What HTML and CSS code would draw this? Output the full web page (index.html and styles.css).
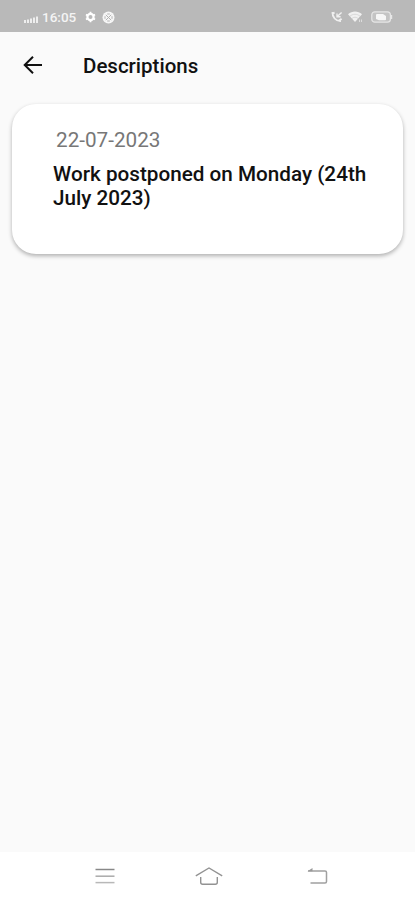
FILE: index.html
```
<!DOCTYPE html>
<html lang="en">
<head>
    <meta charset="UTF-8">
    <meta name="viewport" content="width=device-width, initial-scale=1.0">
    <title>Descriptions</title>
    <link rel="stylesheet" href="styles.css">
</head>
<body>

    <!-- Status bar -->
    <div class="status-bar">
        <div class="status-left">
            <svg class="signal" width="15" height="8" viewBox="0 0 15 8" fill="#eee">
                <rect x="0" y="5" width="2" height="3"/>
                <rect x="3" y="4.5" width="2" height="3.5"/>
                <rect x="6" y="3.5" width="2" height="4.5"/>
                <rect x="9" y="2.5" width="2" height="5.5"/>
                <rect x="12" y="1.5" width="2" height="6.5"/>
            </svg>
            <span class="time">16:05</span>
            <svg class="gear" width="11" height="12" viewBox="0 0 11 12">
                <circle cx="5.5" cy="6" r="3.1" fill="none" stroke="#fff" stroke-width="2.2"/>
                <path d="M5.5 .8v2M5.5 9.2v2M1 3.4l1.6 1M8.4 7.6l1.6 1M1 8.6l1.6-1M8.4 4.4l1.6-1" stroke="#fff" stroke-width="1.8"/>
            </svg>
            <svg width="13" height="13" viewBox="0 0 13 13">
                <circle cx="6.5" cy="6.5" r="6" fill="#f6f6f6"/>
                <path d="M3.8 3.8l5.4 5.4M9.2 3.8L3.8 9.2M5.2 3h2.6M5.2 10h2.6M3 5.2v2.6M10 5.2v2.6" stroke="#b4b4b4" stroke-width="1"/>
            </svg>
        </div>
        <div class="status-right">
            <svg width="12" height="12" viewBox="0 0 12 12" fill="none" stroke="#f0f0f0">
                <path d="M1.6 1.2C1 5.8 4.8 10.4 10 10.2" stroke-width="1.8"/>
                <path d="M.8 2.4l2.8-.6M7.8 9.8l2.8-2" stroke-width="2"/>
                <path d="M10.6 1.4L6.2 5.6M6 2.4v3.4h3.6" stroke-width="1.4"/>
            </svg>
            <svg class="wifi" width="15" height="12" viewBox="0 0 15 12">
                <path d="M0 3.3C4-.4 10-.4 14 3.3L7 11z" fill="#f0f0f0"/>
                <path d="M2 5.2c3-2.6 7-2.6 10 0M4 7.4c2-1.6 4-1.6 6 0" fill="none" stroke="#c8c8c8" stroke-width=".6"/>
                <path d="M11.5 8.5v2.5M13.5 8.5v2.5" stroke="#ddd"/>
            </svg>
            <svg width="22" height="12" viewBox="0 0 22 12">
                <rect x=".8" y=".8" width="18.6" height="10.4" rx="3" fill="#c4c4c4" stroke="#e6e6e6" stroke-width="1.2"/>
                <path d="M5 4q0-1 1-1h6l3 2v3.5q0 .8-1 .8H8L5 8z" fill="#f6f6f6"/>
                <path d="M20.6 4v4" stroke="#e6e6e6" stroke-width="1.2"/>
            </svg>
        </div>
    </div>

    <!-- App bar -->
    <header class="app-bar">
        <svg class="back" width="20" height="20" viewBox="0 0 20 20" fill="none" stroke="#111" stroke-width="2">
            <path d="M19 10H2.5M10 1.7L1.7 10l8.3 8.3"/>
        </svg>
        <h1>Descriptions</h1>
    </header>

    <main class="content">
        <div class="card">
            <p class="date">22-07-2023</p>
            <p class="message">Work postponed on Monday (24th July 2023)</p>
        </div>
    </main>

    <!-- System navigation -->
    <nav class="nav-bar">
        <svg width="20" height="18" viewBox="0 0 20 18" fill="none" stroke-width="1.5">
            <path d="M.5 2.5h19" stroke="#888"/>
            <path d="M.5 9.2h19" stroke="#aaa"/>
            <path d="M.5 15.6h19" stroke="#b8b8b8"/>
        </svg>
        <svg class="home" width="28" height="20" viewBox="0 0 28 20" fill="none" stroke="#929292" stroke-width="1.4">
            <path d="M.8 9.8L14 2l13.2 7.8"/>
            <path d="M5.7 11v5.2q0 2 2 2h12.6q2 0 2-2V11"/>
        </svg>
        <svg width="21" height="18" viewBox="0 0 21 18" fill="none" stroke="#a0a0a0" stroke-width="1.5">
            <path d="M1 4h17q1.5 0 1.5 1.5v9q0 1.5-1.5 1.5H3.5"/>
            <path d="M.5 4.2L5.5 1v3.2z" fill="#999" stroke="none"/>
        </svg>
    </nav>

</body>
</html>
```

FILE: styles.css
```
* {
    box-sizing: border-box;
}
body {
    font-family: Roboto, sans-serif;
    background-color: #fafafa;
    margin: 0;
    height: 100vh;
    display: flex;
    flex-direction: column;
}
svg {
    display: block;
    flex-shrink: 0;
}

/* Status bar */
.status-bar {
    height: 32px;
    padding: 2px 22px 0 24px;
    background-color: #b9b9b9;
    display: flex;
    align-items: center;
    justify-content: space-between;
}
.status-left, .status-right {
    display: flex;
    align-items: center;
}
.signal {
    margin-top: 4px;
}
.time {
    margin-left: 3px;
    width: 35px;
    font-size: 13.5px;
    font-weight: 500;
    color: #f4f4f4;
}
.gear {
    margin: 0 6px 0 8px;
}
.wifi {
    margin: 0 8px 0 5px;
}

/* App bar */
.app-bar {
    height: 67px;
    padding-left: 23px;
    display: flex;
    align-items: center;
}
.back {
    margin-bottom: 1px;
}
.app-bar h1 {
    margin: 0 0 0 40px;
    font-size: 20.5px;
    font-weight: 500;
    color: #111;
}

/* Description card */
.content {
    flex: 1;
    padding: 5px 12px;
}
.card {
    height: 150px;
    padding: 24px 32px 0 41px;
    background-color: #fff;
    border-radius: 24px;
    box-shadow: 0 2px 4px rgba(0, 0, 0, 0.3);
}
.card p {
    margin: 0;
    line-height: 24px;
}
.date {
    padding-left: 3px;
    font-size: 20.7px;
    color: #777;
}
.card .message {
    margin-top: 10px;
    font-size: 20.7px;
    font-weight: 500;
    color: #111;
}

/* System navigation */
.nav-bar {
    height: 48px;
    padding: 0 87px 0 95px;
    background-color: #fff;
    display: flex;
    align-items: center;
    justify-content: space-between;
}
.home {
    margin-right: 5px;
}
```
